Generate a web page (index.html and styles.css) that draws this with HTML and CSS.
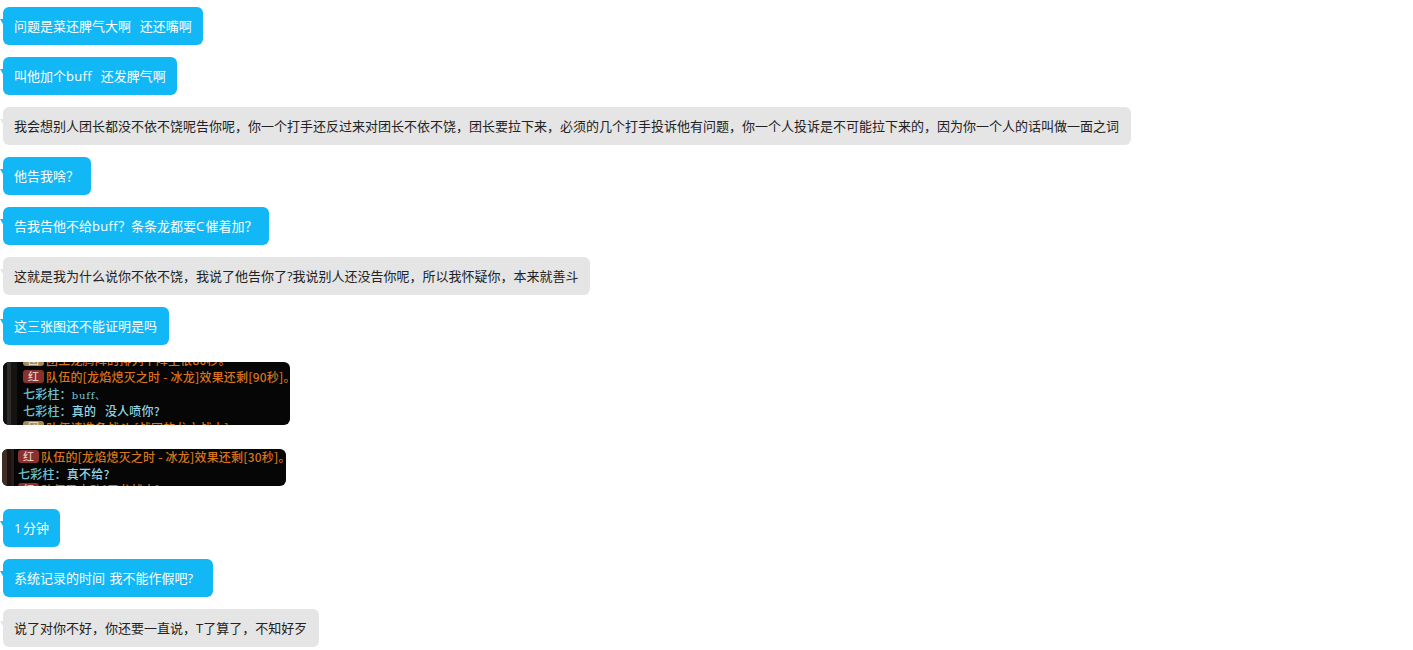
FILE: index.html
```html
<!DOCTYPE html>
<html lang="zh-CN">
<head>
<meta charset="utf-8">
<title>聊天记录</title>
<link rel="stylesheet" href="styles.css">
</head>
<body>
<main class="chat">
  <div class="bubble blue">问题是菜还脾气大啊&nbsp;&nbsp;还还嘴啊</div>
  <div class="bubble blue">叫他加个<span class="latin">buff</span>&nbsp;&nbsp;还发脾气啊</div>
  <div class="bubble grey">我会想别人团长都没不依不饶呢告你呢，你一个打手还反过来对团长不依不饶，团长要拉下来，必须的几个打手投诉他有问题，你一个人投诉是不可能拉下来的，因为你一个人的话叫做一面之词</div>
  <div class="bubble blue">他告我啥？</div>
  <div class="bubble blue">告我告他不给<span class="latin">buff</span>？条条龙都要<span class="digit">C</span>催着加？</div>
  <div class="bubble grey">这就是我为什么说你不依不饶，我说了他告你了?我说别人还没告你呢，所以我怀疑你，本来就善斗</div>
  <div class="bubble blue">这三张图还不能证明是吗</div>

  <div class="shot shot-a">
    <div class="shot-side side-a"></div>
    <div class="shot-log log-a">
      <div class="line orange"><span class="tag gold">团</span>团王龙腾阵的排列不阵主很80秒。</div>
      <div class="line orange"><span class="tag red">红</span>队伍的[龙焰熄灭之时 - 冰龙]效果还剩[90秒]。</div>
      <div class="line cyan">七彩柱：<span class="small-latin">buff、</span></div>
      <div class="line cyan">七彩柱：<span class="said">真的&nbsp;&nbsp;&nbsp;没人喷你?</span></div>
      <div class="line orange"><span class="tag gold">团</span>队伍请准备战斗 [战团的龙之战士]</div>
    </div>
  </div>

  <div class="shot shot-b">
    <div class="shot-side side-b"></div>
    <div class="shot-log log-b">
      <div class="line orange"><span class="tag red">红</span>队伍的[龙焰熄灭之时 - 冰龙]效果还剩[30秒]。</div>
      <div class="line cyan">七彩柱：<span class="said">真不给?</span></div>
      <div class="line orange"><span class="tag red">红</span>队伍已击败[巨龙战士]</div>
    </div>
  </div>

  <div class="bubble blue"><span class="digit">1</span>分钟</div>
  <div class="bubble blue">系统记录的时间 我不能作假吧?&nbsp;&nbsp;</div>
  <div class="bubble grey">说了对你不好，你还要一直说，T了算了，不知好歹</div>
</main>
</body>
</html>
```

FILE: styles.css
```css
html, body {
  margin: 0;
  padding: 0;
  background: #fff;
}

body {
  height: 650px;
  overflow: hidden;
  font-family: "Open Sans", "Noto Sans CJK SC", sans-serif;
}

.chat {
  display: flex;
  flex-direction: column;
  align-items: flex-start;
  padding: 7px 0 0 3px;
}

.bubble {
  position: relative;
  box-sizing: border-box;
  height: 38px;
  margin-bottom: 12px;
  padding: 0 11.5px 0 11px;
  border-radius: 6px;
  font-size: 13px;
  line-height: 38px;
  word-spacing: 1px;
  white-space: nowrap;
}

.bubble::before {
  content: "";
  position: absolute;
  left: -3px;
  top: 12px;
  border-top: 5px solid transparent;
  border-left: 3px solid transparent;
}

.latin {
  letter-spacing: 0.3px;
}

.digit {
  letter-spacing: 1.5px;
}

.blue {
  background: #12b7f5;
  color: #fff;
}

.blue::before {
  border-top-color: #12b7f5;
}

.grey {
  background: #e5e5e5;
  color: #222;
}

.grey::before {
  border-top-color: #e5e5e5;
}

.shot {
  display: flex;
  overflow: hidden;
  background: #060606;
  border-radius: 6px;
}

.shot-a {
  width: 287px;
  height: 63px;
  margin-top: 5px;
  margin-bottom: 24px;
}

.shot-b {
  width: 284px;
  height: 37px;
  margin-left: -1px;
  margin-bottom: 23px;
}

.shot-side {
  flex: none;
  width: 14px;
}

.side-a {
  background: linear-gradient(90deg, #101010 0 4px, #2d2a29 4px 8px, #161413 8px);
}

.side-b {
  width: 12px;
  background: linear-gradient(90deg, #3f2c25 0 5px, #1c1311 5px 9px, #281c18 9px);
}

.shot-log {
  flex: 1;
  min-width: 0;
  padding-left: 6px;
  font-family: "Noto Sans CJK SC", sans-serif;
  font-size: 12px;
  font-weight: 500;
  white-space: nowrap;
}

.log-a {
  margin-top: -11.5px;
}

.log-b {
  padding-left: 4px;
  margin-top: -1px;
}

.line {
  height: 17px;
  line-height: 17px;
  letter-spacing: 0.2px;
}

.log-b .line {
  height: 16.5px;
}

.orange {
  color: #d9741c;
}

.cyan {
  color: #6cc3d0;
}

.said {
  color: #93d6e6;
}

.small-latin {
  font-family: "DejaVu Serif", serif;
  font-size: 10px;
  letter-spacing: 0.8px;
  color: #7fc5d4;
}

.tag {
  display: inline-block;
  width: 21px;
  height: 13px;
  margin-right: 2px;
  border-radius: 3px;
  font-size: 11px;
  font-weight: 400;
  line-height: 13px;
  text-align: center;
  color: #f2e0d8;
  letter-spacing: 0;
  vertical-align: 1px;
}

.red {
  background: #8b3030;
}

.gold {
  background: #a68a55;
}
```
